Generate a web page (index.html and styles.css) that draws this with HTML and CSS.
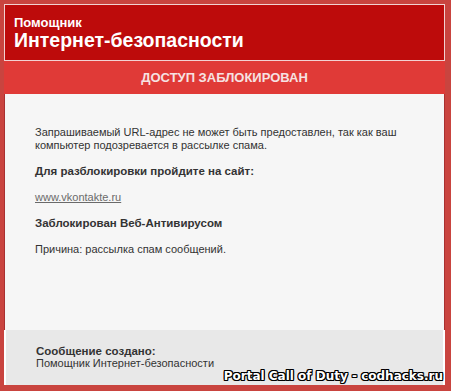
FILE: index.html
```html
<!DOCTYPE html>
<html lang="ru">
<head>
    <meta charset="UTF-8">
    <title>Доступ заблокирован</title>
    <link rel="stylesheet" href="styles.css">
</head>
<body>
    <div class="frame">
        <div class="header">
            <div class="header-small">Помощник</div>
            <div class="header-big">Интернет-безопасности</div>
        </div>
        <div class="band">ДОСТУП ЗАБЛОКИРОВАН</div>
        <div class="content">
            <p>Запрашиваемый URL-адрес не может быть предоставлен, так как ваш компьютер подозревается в рассылке спама.</p>
            <p class="bold">Для разблокировки пройдите на сайт:</p>
            <p><a href="#" class="site-link">www.vkontakte.ru</a></p>
            <p class="bold">Заблокирован Веб-Антивирусом</p>
            <p>Причина: рассылка спам сообщений.</p>
        </div>
        <div class="footer">
            <div class="bold">Сообщение создано:</div>
            <div>Помощник Интернет-безопасности</div>
            <span class="watermark">Portal Call of Duty - codhacks.ru</span>
        </div>
    </div>
</body>
</html>
```

FILE: styles.css
```css
body {
    margin: 0;
    padding: 0;
    font-family: "Liberation Sans", Arial, sans-serif;
    background: #fff;
}
.frame {
    width: 441px;
    height: 381px;
    border-style: solid;
    border-color: #c9443f;
    border-width: 4px 6px 6px 4px;
    display: flex;
    flex-direction: column;
    position: relative;
}
.header {
    height: 55px;
    background: #bd0b0b;
    border: 1px solid #f2d2d2;
    color: #fff;
    padding-left: 9px;
}
.header-small {
    font-weight: bold;
    font-size: 13px;
    line-height: 15px;
    margin-top: 10px;
}
.header-big {
    font-weight: bold;
    font-size: 19.5px;
    line-height: 20px;
}
.band {
    height: 33px;
    background: #e03a37;
    color: #f6e2e2;
    font-weight: bold;
    font-size: 13px;
    line-height: 33px;
    text-align: center;
}
.content {
    height: 236px;
    background: #f6f6f6;
    border-left: 1px solid #a93030;
    border-right: 1px solid #a93030;
    padding: 32px 0 0 30px;
    box-sizing: border-box;
    color: #333;
    font-size: 11px;
    line-height: 13px;
}
.content p {
    margin: 0 30px 13px 0;
}
.bold {
    font-weight: bold;
    font-size: 11.5px;
}
.site-link {
    color: #6a6a6a;
}
.footer {
    flex: 1;
    background: #e8e8e8;
    margin: 0 2px;
    padding: 15px 0 0 30px;
    color: #333;
    font-size: 11px;
    line-height: 12px;
}
.watermark {
    position: absolute;
    right: 2px;
    bottom: 2px;
    color: #fff;
    font-family: "DejaVu Sans", sans-serif;
    font-weight: bold;
    font-size: 12px;
    line-height: 13px;
    text-shadow: 1px 0 0 #000, -1px 0 0 #000, 0 1px 0 #000, 0 -1px 0 #000, 1px 1px 0 #000, -1px -1px 0 #000, 1px -1px 0 #000, -1px 1px 0 #000;
}
```
